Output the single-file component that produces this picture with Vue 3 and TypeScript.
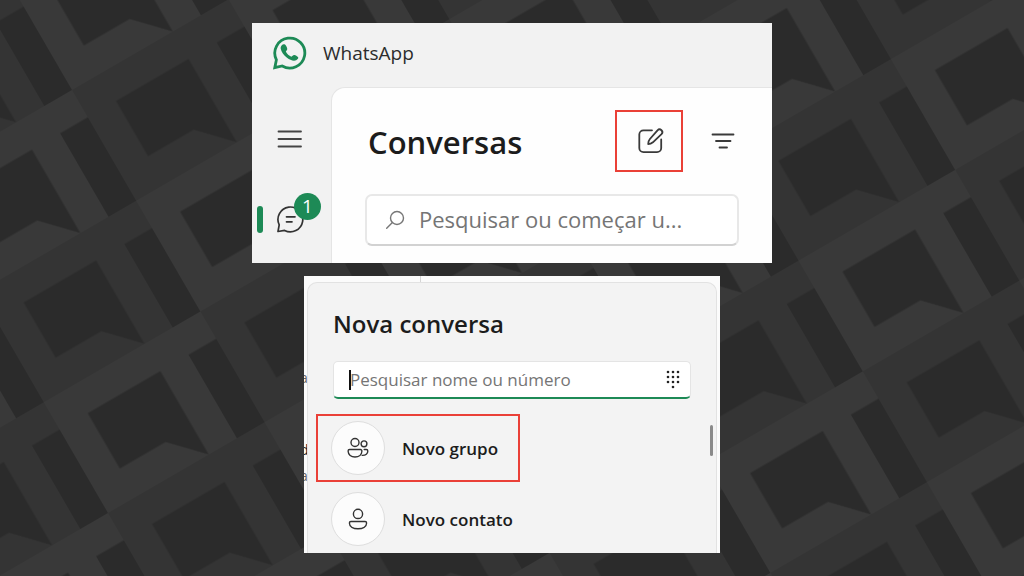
<script setup lang="ts">
import { ref } from 'vue'

interface NewChatAction {
  id: string
  label: string
  highlighted: boolean
}

const search = ref('')
const contactSearch = ref('')
const unread = ref(1)

const actions: NewChatAction[] = [
  { id: 'group', label: 'Novo grupo', highlighted: true },
  { id: 'contact', label: 'Novo contato', highlighted: false },
]

const cells = [
  { x: 0, y: 0, fill: '#343434' },
  { x: 181, y: 0, fill: '#393939' },
  { x: 0, y: 128, fill: '#393939' },
  { x: 181, y: 128, fill: '#343434' },
]

const keypadDots = [
  [2, 2], [7, 2], [12, 2],
  [2, 7], [7, 7], [12, 7],
  [2, 12], [7, 12], [12, 12],
  [7, 17],
]
</script>

<template>
  <main class="page">
    <svg class="backdrop" aria-hidden="true">
      <defs>
        <pattern
          id="lattice"
          width="362"
          height="256"
          patternUnits="userSpaceOnUse"
          patternTransform="translate(72 90) rotate(-30.1)"
        >
          <g v-for="(cell, i) in cells" :key="i" :transform="`translate(${cell.x} ${cell.y})`">
            <rect width="181" height="128" :fill="cell.fill" />
            <path d="M32.5 31.5H116.5V128L85.5 95.5H32.5Z M149 31.5H181V128H149Z" fill="#2b2b2b" />
          </g>
        </pattern>
      </defs>
      <rect width="100%" height="100%" fill="url(#lattice)" />
    </svg>

    <section class="window">
      <header class="titlebar">
        <svg class="logo" viewBox="0 0 34 34" aria-hidden="true">
          <path
            d="M1.8 31.6 3.4 23.8A15 15 0 1 1 9.2 30Z"
            fill="none"
            stroke="#1d8a56"
            stroke-width="2.8"
          />
          <path
            d="M8.8 9.2C9.6 8.2 11 7.8 12 8.6C13 9.4 13.8 11 14.2 12.4C14.6 13.8 13.2 14.8 12.8 15.6C14 18 16 19.8 18.4 20.8C19.3 20.2 20 18.8 21.4 19C22.6 19.3 24.2 20.2 25 21C26 22.2 24.4 23.6 23.2 24.2C20.6 25.4 17 24 14 21.8C10.8 19.2 8.2 15.6 7.7 12.4C7.6 11.2 8 10 8.8 9.2Z"
            fill="#1d8a56"
          />
        </svg>
        <span class="app-name">WhatsApp</span>
      </header>

      <div class="body">
        <nav class="rail">
          <button class="icon-button" type="button" aria-label="Menu">
            <svg width="28" height="20" viewBox="0 0 28 20">
              <path d="M2.5 2.5H25M2.5 10H25M2.5 17.5H25" stroke="#444" stroke-width="1.8" stroke-linecap="round" />
            </svg>
          </button>
          <button class="icon-button chats" type="button" aria-label="Conversas">
            <svg width="28" height="28" viewBox="0 0 28 28" fill="none" stroke="#333" stroke-linecap="round" stroke-linejoin="round">
              <path d="M2 26.5 3.2 19.8A12.4 12.4 0 1 1 8.6 25.4Z" stroke-width="1.7" />
              <path d="M10.500 11.800H19M10.500 16.800H16" stroke-width="1.7" />
            </svg>
            <span class="badge">{{ unread }}</span>
          </button>
        </nav>

        <div class="chats-panel">
          <div class="heading-row">
            <h1>Conversas</h1>
            <div class="mark compose-mark">
              <button class="icon-button" type="button" aria-label="Nova conversa">
                <svg width="28" height="28" viewBox="0 0 28 28" fill="none" stroke="#3a3a3a" stroke-width="1.8" stroke-linecap="round" stroke-linejoin="round">
                  <path d="M15 3.3H6.500A4.200 4.200 0 0 0 2.300 7.500V21A4.200 4.200 0 0 0 6.500 25.200H20A4.200 4.200 0 0 0 24.200 21V12.500" />
                  <path d="M20.500 3.300A2.700 2.700 0 0 1 24.500 7.200L15.900 15.300C14.600 16.400 12.800 17.100 11.200 17.100C11.200 15.300 11.700 13.400 12.900 12Z" />
                </svg>
              </button>
            </div>
            <button class="icon-button" type="button" aria-label="Filtrar">
              <svg width="28" height="20" viewBox="0 0 28 20">
                <path d="M3.5 3.500H24.500M7 10H21.500M10.500 16.500H18" stroke="#3a3a3a" stroke-width="1.8" stroke-linecap="round" />
              </svg>
            </button>
          </div>
          <label class="search">
            <svg width="20" height="20" viewBox="0 0 20 20" fill="none" stroke="#777" stroke-width="1.4" stroke-linecap="round">
              <circle cx="12" cy="8" r="6.5" />
              <path d="M7.400 12.600 1.700 18.300" />
            </svg>
            <input v-model="search" type="text" aria-label="Pesquisar conversas" placeholder="Pesquisar ou começar u..." />
          </label>
        </div>
      </div>
    </section>

    <section class="popup">
      <div class="behind" aria-hidden="true">
        <span>a</span><span class="dark">d</span><span>a</span>
      </div>
      <div class="sheet">
        <h2>Nova conversa</h2>
        <label class="contact-search">
          <span class="caret"></span>
          <input v-model="contactSearch" type="text" aria-label="Pesquisar nome ou número" placeholder="Pesquisar nome ou número" />
          <button class="icon-button" type="button" aria-label="Teclado">
            <svg width="14" height="19" viewBox="0 0 14 19" fill="#222">
              <circle v-for="([cx, cy], i) in keypadDots" :key="i" :cx="cx" :cy="cy" r="1.3" />
            </svg>
          </button>
        </label>
        <ul class="actions">
          <li v-for="action in actions" :key="action.id" :class="{ mark: action.highlighted }">
            <button class="action" type="button">
              <span class="avatar">
                <svg width="24" height="24" viewBox="0 0 24 24" fill="none" stroke="#333" stroke-width="1.4" stroke-linejoin="round">
                  <template v-if="action.id === 'group'">
                    <circle cx="9" cy="6.500" r="4" />
                    <path d="M3.600 13.500H14.400A1.500 1.500 0 0 1 15.900 15C15.900 18.800 12.700 21 9 21S2.100 18.800 2.100 15A1.500 1.500 0 0 1 3.600 13.500Z" />
                    <circle cx="18" cy="7.800" r="2.900" />
                    <path d="M18.200 13.500H20.300A1.500 1.500 0 0 1 21.800 15C21.800 17.800 19.800 19.500 16.200 19.400" stroke-linecap="round" />
                  </template>
                  <template v-else>
                    <circle cx="12" cy="6.900" r="4.600" />
                    <path d="M4.900 14.500H19.100A1.500 1.500 0 0 1 20.600 16C20.600 19.700 16.700 21.800 12 21.800S3.400 19.700 3.400 16A1.500 1.500 0 0 1 4.900 14.500Z" />
                  </template>
                </svg>
              </span>
              {{ action.label }}
            </button>
          </li>
        </ul>
        <span class="thumb"></span>
      </div>
    </section>
  </main>
</template>

<style>
body {
  margin: 0;
  background: #2b2b2b;
}
</style>

<style scoped>
* {
  box-sizing: border-box;
}

.page {
  position: relative;
  min-height: 100vh;
  padding: 23px 16px;
  display: flex;
  flex-direction: column;
  align-items: center;
  gap: 13px;
  overflow: hidden;
  font-family: "Open Sans", "Noto Sans", sans-serif;
  color: #1c1c1c;
}

.backdrop {
  position: absolute;
  inset: 0;
  width: 100%;
  height: 100%;
}

h1,
h2,
ul {
  margin: 0;
  padding: 0;
}

svg {
  display: block;
  flex: none;
}

button,
input {
  font: inherit;
  color: inherit;
  border: 0;
  padding: 0;
  background: none;
}

input {
  flex: 1;
  min-width: 0;
  outline: none;
}

input::placeholder {
  color: #757575;
  opacity: 1;
}

.icon-button {
  display: flex;
  align-items: center;
  justify-content: center;
}

.mark {
  border: 2px solid #ea4037;
}

.window {
  position: relative;
  width: 100%;
  max-width: 520px;
  background: #f2f2f2;
}

.titlebar {
  display: flex;
  align-items: center;
  gap: 16px;
  height: 64px;
  padding: 0 21px 4px;
}

.logo {
  width: 34px;
  height: 34px;
}

.app-name {
  font-size: 19px;
  line-height: 28px;
  color: #2c2c2c;
}

.body {
  display: flex;
}

.rail {
  width: 79px;
  padding: 42px 24px 0;
  display: flex;
  flex-direction: column;
  align-items: flex-start;
  gap: 56px;
}

.chats {
  position: relative;
}

.chats::before {
  content: "";
  position: absolute;
  left: -19px;
  top: 1px;
  width: 6px;
  height: 27px;
  border-radius: 3px;
  background: #1d8a56;
}

.badge {
  position: absolute;
  left: 18px;
  top: -12px;
  width: 27px;
  height: 27px;
  border-radius: 50%;
  background: #1d8a56;
  color: #fff;
  font-size: 19px;
  line-height: 27px;
  text-align: center;
}

.chats-panel {
  flex: 1;
  min-width: 0;
  padding: 22px 33px 17px;
  border: solid #e5e5e5;
  border-width: 1px 0 0 1px;
  border-top-left-radius: 14px;
  background: #fefefe;
}

.heading-row {
  display: flex;
  align-items: center;
  gap: 26px;
  padding: 0 2px 0 3px;
}

h1 {
  flex: 1;
  font-size: 31px;
  font-weight: 600;
  line-height: 40px;
  padding-top: 2px;
}

.compose-mark {
  padding: 15px 16px 15px 20px;
  height: 62px;
}

.search {
  display: flex;
  align-items: center;
  gap: 14px;
  height: 52px;
  margin-top: 22px;
  padding: 0 18px;
  border: 2px solid #e8e8e8;
  border-bottom-color: #d2d2d2;
  border-radius: 7px;
  background: #fff;
  font-size: 22px;
}

.search input {
  padding-bottom: 2px;
}

.popup {
  position: relative;
  width: 100%;
  max-width: 416px;
  padding: 6px 3px 0;
  background: #fbfbfb;
}

.popup::before {
  content: "";
  position: absolute;
  left: 116px;
  top: 0;
  width: 1px;
  height: 6px;
  background: #d5d5d5;
}

.behind {
  position: absolute;
  left: 0;
  top: 92px;
  width: 3px;
  overflow: hidden;
  color: #666;
  font-size: 14px;
  line-height: 20px;
  display: flex;
  flex-direction: column;
}

.behind span {
  margin-left: -4px;
}

.behind .dark {
  margin-top: 52px;
  margin-bottom: 6px;
  color: #222;
}

.sheet {
  position: relative;
  padding: 25px 25px 0;
  border: 1px solid #e2e2e2;
  border-bottom: 0;
  border-radius: 10px 10px 0 0;
  background: #f3f3f3;
}

h2 {
  font-size: 24px;
  font-weight: 600;
  line-height: 32px;
}

.contact-search {
  position: relative;
  display: flex;
  align-items: center;
  height: 38px;
  margin-top: 21px;
  padding: 0 10px 0 16px;
  border: 1px solid #e4e4e4;
  border-bottom: 2px solid #1d8a56;
  border-radius: 5px;
  background: #fff;
  font-size: 17px;
}

.caret {
  position: absolute;
  left: 15px;
  top: 8px;
  width: 2px;
  height: 20px;
  background: #111;
}

.actions {
  display: flex;
  flex-direction: column;
  align-items: flex-start;
  gap: 3px;
  margin: 15px 0 0 -17px;
  list-style: none;
}

.actions li {
  height: 68px;
  width: 204px;
  padding: 7px 15px;
}

.actions li.mark {
  padding: 5px 13px;
}

.action {
  display: flex;
  align-items: center;
  gap: 17px;
  font-size: 17px;
  font-weight: 600;
  white-space: nowrap;
}

.avatar {
  display: flex;
  align-items: center;
  justify-content: center;
  flex: none;
  width: 54px;
  height: 54px;
  border: 1px solid #dedede;
  border-radius: 50%;
  background: #fcfcfc;
}

.thumb {
  position: absolute;
  right: 3px;
  top: 142px;
  width: 3px;
  height: 31px;
  border-radius: 2px;
  background: #8a8a8a;
}
</style>
